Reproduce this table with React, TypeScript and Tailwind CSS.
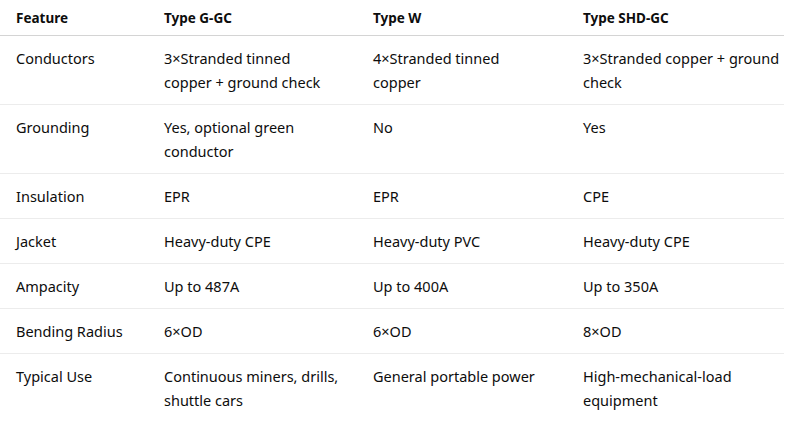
import React from "react";

// each cell is a list of lines, broken where the reference breaks them
type Cell = string[];

type Row = {
  feature: Cell;
  ggc: Cell;
  w: Cell;
  shd: Cell;
};

const rows: Row[] = [
  {
    feature: ["Conductors"],
    ggc: ["3×Stranded tinned", "copper + ground check"],
    w: ["4×Stranded tinned", "copper"],
    shd: ["3×Stranded copper + ground", "check"],
  },
  {
    feature: ["Grounding"],
    ggc: ["Yes, optional green", "conductor"],
    w: ["No"],
    shd: ["Yes"],
  },
  { feature: ["Insulation"], ggc: ["EPR"], w: ["EPR"], shd: ["CPE"] },
  {
    feature: ["Jacket"],
    ggc: ["Heavy-duty CPE"],
    w: ["Heavy-duty PVC"],
    shd: ["Heavy-duty CPE"],
  },
  {
    feature: ["Ampacity"],
    ggc: ["Up to 487A"],
    w: ["Up to 400A"],
    shd: ["Up to 350A"],
  },
  { feature: ["Bending Radius"], ggc: ["6×OD"], w: ["6×OD"], shd: ["8×OD"] },
  {
    feature: ["Typical Use"],
    ggc: ["Continuous miners, drills,", "shuttle cars"],
    w: ["General portable power"],
    shd: ["High-mechanical-load", "equipment"],
  },
];

const App: React.FC = () => {
  return (
    <div className="w-[805px] h-[423px] bg-white overflow-hidden font-['Noto_Sans',sans-serif] text-[#0d0d0d]">
      <table className="w-[784px] table-fixed border-collapse text-left">
        <colgroup>
          <col className="w-[148px]" />
          <col className="w-[209px]" />
          <col className="w-[210px]" />
          <col className="w-[217px]" />
        </colgroup>
        <thead>
          <tr className="border-b border-[#d4d4d4]">
            {["Feature", "Type G-GC", "Type W", "Type SHD-GC"].map((h) => (
              <th
                key={h}
                className="pl-4 pr-2 pt-[8px] pb-[7px] text-[13.5px] leading-[20px] font-bold"
              >
                {h}
              </th>
            ))}
          </tr>
        </thead>
        <tbody>
          {rows.map((r, i) => (
            <tr
              key={r.feature[0]}
              className={i < rows.length - 1 ? "border-b border-[#ececec]" : ""}
            >
              {[r.feature, r.ggc, r.w, r.shd].map((c, j) => (
                <td
                  key={j}
                  className="pl-4 pr-2 pt-[10px] pb-[10px] text-[14.5px] leading-[24px] align-top whitespace-nowrap"
                >
                  {c.map((line, k) => (
                    <div key={k}>{line}</div>
                  ))}
                </td>
              ))}
            </tr>
          ))}
        </tbody>
      </table>
    </div>
  );
};

export default App;
